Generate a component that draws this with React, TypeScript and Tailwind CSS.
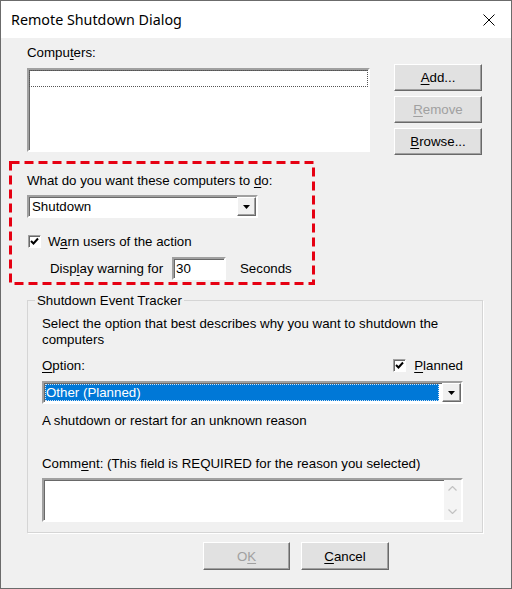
import React from 'react';

// underlined access key
function U({ children }: { children: React.ReactNode }) {
  return <span className="underline underline-offset-2">{children}</span>;
}

function Button({ children, disabled, className = '' }: { children: React.ReactNode; disabled?: boolean; className?: string }) {
  return (
    <div
      className={`flex items-center justify-center h-[27px] bg-[#e1e1e1] border border-t-white border-l-white border-b-[#696969] border-r-[#696969] shadow-[inset_-1px_-1px_0_#a0a0a0] ${
        disabled ? 'text-[#a0a0a0]' : 'text-black'
      } ${className}`}
    >
      {children}
    </div>
  );
}

function CheckBox() {
  return (
    <div className="w-[13px] h-[13px] bg-white border border-t-[#a0a0a0] border-l-[#a0a0a0] border-b-white border-r-white shadow-[inset_1px_1px_0_#696969] flex items-center justify-center">
      <svg width="9" height="9" viewBox="0 0 9 9">
        <path d="M1 4 L3.5 6.5 L8 1.5" stroke="#000" strokeWidth="2" fill="none" />
      </svg>
    </div>
  );
}

function DropArrow() {
  return (
    <div className="w-[19px] h-full bg-[#f0f0f0] border border-t-white border-l-white border-b-[#696969] border-r-[#696969] shadow-[inset_-1px_-1px_0_#a0a0a0] flex items-center justify-center">
      <svg width="7" height="4" viewBox="0 0 7 4">
        <path d="M0 0 H7 L3.5 4 Z" fill="#000" />
      </svg>
    </div>
  );
}

const sunken =
  'border-2 border-t-[#a0a0a0] border-l-[#a0a0a0] border-b-white border-r-white shadow-[inset_1px_1px_0_#696969]';

export default function App() {
  return (
    <div className="w-[512px] h-[589px] flex flex-col bg-[#f0f0f0] border border-[#6b6b6b] text-[13.3px] leading-[15px] text-black font-['Liberation_Sans',Arial,sans-serif] overflow-hidden">
      {/* title bar */}
      <div className="h-[37px] bg-white flex items-center justify-between pl-[10px] pr-[16px] shrink-0">
        <span className="text-[14.3px] font-['Noto_Sans',sans-serif] text-black">Remote Shutdown Dialog</span>
        <svg width="12" height="12" viewBox="0 0 12 12">
          <path d="M0.5 0.5 L11.5 11.5 M11.5 0.5 L0.5 11.5" stroke="#000" strokeWidth="1" />
        </svg>
      </div>

      {/* computers */}
      <div className="flex items-start pl-[26px]">
        <div className="w-[343px] flex flex-col">
          <div className="mt-[7px]">
            Compu<U>t</U>ers:
          </div>
          <div className={`mt-[8px] h-[84px] bg-white ${sunken}`}>
            <div className="h-[17px] border border-dotted border-[#555]" />
          </div>
        </div>
        <div className="ml-[24px] mt-[26px] flex flex-col gap-[5px] w-[88px]">
          <Button>
            <U>A</U>dd...
          </Button>
          <Button disabled>
            <U>R</U>emove
          </Button>
          <Button>
            <U>B</U>rowse...
          </Button>
        </div>
      </div>

      {/* action (highlighted) */}
      <div className="relative ml-[8px] mt-[6px] w-[306px] h-[124px] pl-[18px] pt-[12px]">
        <svg className="absolute inset-0 pointer-events-none" width="306" height="124">
          <rect x="1.5" y="1.5" width="303" height="121" fill="none" stroke="#e60012" strokeWidth="3" strokeDasharray="9 5" />
        </svg>
        <div>
          What do you want these computers to <U>d</U>o:
        </div>
        <div className={`mt-[7px] w-[231px] h-[23px] bg-white flex items-center ${sunken}`}>
          <span className="flex-1 pl-[3px]">Shutdown</span>
          <DropArrow />
        </div>
        <div className="mt-[16px] flex items-center gap-[7px] pl-px">
          <CheckBox />
          <span>
            W<U>a</U>rn users of the action
          </span>
        </div>
        <div className="mt-[8px] flex items-center pl-[23px]">
          <span className="w-[122px] whitespace-nowrap">
            Disp<U>l</U>ay warning for
          </span>
          <div className={`w-[54px] h-[23px] bg-white flex items-center pl-[2px] ${sunken}`}>30</div>
          <span className="ml-[14px]">Seconds</span>
        </div>
      </div>

      {/* shutdown event tracker */}
      <fieldset className="ml-[26px] mt-[8px] w-[456px] border border-[#d5d5d5] shadow-[1px_1px_0_white] pl-[14px] pr-[19px] pb-[10px]">
        <legend className="-ml-[7px] px-[2px]">Shutdown Event Tracker</legend>
        <div className="mt-[8px] leading-[16px] whitespace-nowrap">
          Select the option that best describes why you want to shutdown the
          <br />
          computers
        </div>
        <div className="mt-[10px] flex items-center justify-between">
          <span>
            <U>O</U>ption:
          </span>
          <div className="flex items-center gap-[8px]">
            <CheckBox />
            <span>
              <U>P</U>lanned
            </span>
          </div>
        </div>
        <div className={`mt-[8px] h-[23px] bg-white flex items-center ${sunken}`}>
          <div className="flex-1 h-full p-px">
            <div className="h-full bg-[#0078d7] text-white flex items-center pl-[1px] outline-1 outline-dotted outline-[#cfe3f7] -outline-offset-1">
              Other (Planned)
            </div>
          </div>
          <div className="ml-[2px] h-full">
            <DropArrow />
          </div>
        </div>
        <div className="mt-[9px]">A shutdown or restart for an unknown reason</div>
        <div className="mt-[28px] whitespace-nowrap">
          Comm<U>e</U>nt: (This field is REQUIRED for the reason you selected)
        </div>
        <div className={`mt-[7px] h-[44px] bg-white flex justify-end ${sunken}`}>
          <div className="w-[17px] h-full bg-[#f4f4f4] flex flex-col items-center justify-between py-[6px]">
            <svg width="9" height="5" viewBox="0 0 9 5">
              <path d="M0.5 4.5 L4.5 0.5 L8.5 4.5" stroke="#c2c2c2" strokeWidth="1.2" fill="none" />
            </svg>
            <svg width="9" height="5" viewBox="0 0 9 5">
              <path d="M0.5 0.5 L4.5 4.5 L8.5 0.5" stroke="#c2c2c2" strokeWidth="1.2" fill="none" />
            </svg>
          </div>
        </div>
      </fieldset>

      {/* footer buttons */}
      <div className="flex ml-[202px] mt-[9px] gap-[11px]">
        <Button disabled className="w-[87px] h-[28px]">
          O<U>K</U>
        </Button>
        <Button className="w-[88px] h-[28px]">
          <U>C</U>ancel
        </Button>
      </div>
    </div>
  );
}
